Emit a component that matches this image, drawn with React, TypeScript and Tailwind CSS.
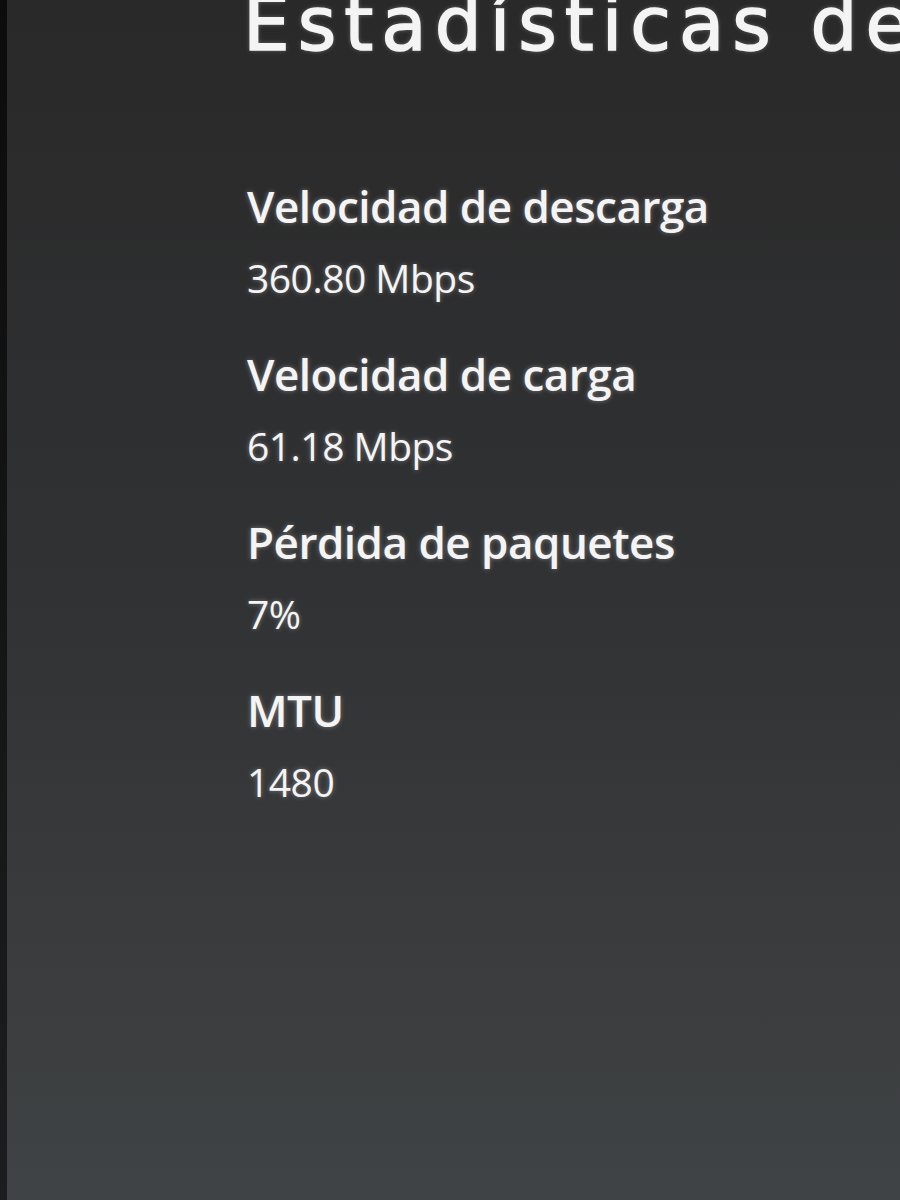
import React from 'react';

const stats = [
  { label: 'Velocidad de descarga', value: '360.80 Mbps' },
  { label: 'Velocidad de carga', value: '61.18 Mbps' },
  { label: 'Pérdida de paquetes', value: '7%' },
  { label: 'MTU', value: '1480' },
];

const glow = '[text-shadow:0_0_5px_rgba(255,255,255,0.35)]';

export default function App() {
  return (
    <div className="flex h-[1200px] w-[900px] overflow-hidden bg-gradient-to-b from-[#29292a] via-[#313233] to-[#404345] font-['Open_Sans',sans-serif] text-[#f4f4f4]">
      {/* dark bezel edge on the left */}
      <div className="w-[7px] shrink-0 bg-gradient-to-b from-[#0c0c0c] to-[#1c1d1e]" />

      <div className="flex min-w-0 flex-col pl-[240px]">
        <h1 className={`-mt-[13px] -ml-[4px] whitespace-nowrap font-['DejaVu_Sans',sans-serif] text-[74px] leading-none font-normal tracking-[8px] [-webkit-text-stroke:1.5px_#f4f4f4] ${glow}`}>
          Estadísticas de red
        </h1>

        {/* stats list */}
        <div className="mt-[121px] flex flex-col gap-[48px]">
          {stats.map((s) => (
            <div key={s.label} className="flex flex-col gap-[24px]">
              <span className={`text-[44px] leading-[48px] font-semibold tracking-[-0.5px] ${glow}`}>{s.label}</span>
              <span className={`text-[39px] leading-[48px] font-normal tracking-[-0.5px] ${glow}`}>{s.value}</span>
            </div>
          ))}
        </div>
      </div>
    </div>
  );
}
